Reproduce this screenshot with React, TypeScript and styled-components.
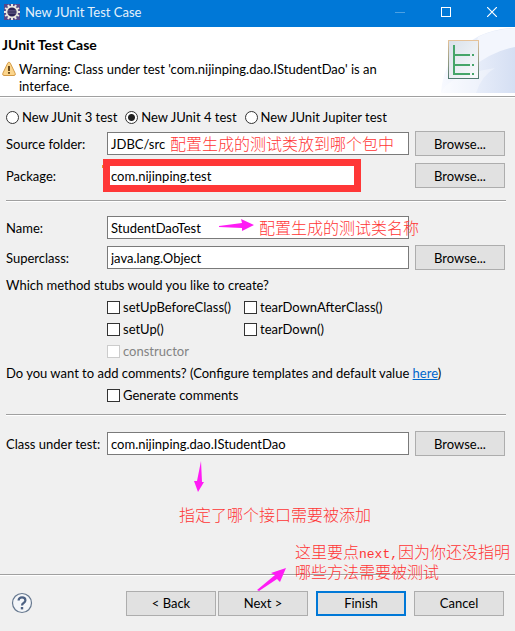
import React from "react";
import styled, { createGlobalStyle, css } from "styled-components";

const GlobalStyle = createGlobalStyle`
  *, *::before, *::after { box-sizing: border-box; }
  body { margin: 0; }
  body, input, button {
    font-family: Lato, "Noto Sans CJK SC", sans-serif;
    font-size: 13px;
    line-height: 18px;
    color: #000;
  }
`;

const Dialog = styled.main`
  display: flex;
  flex-direction: column;
  min-height: 100vh;
  overflow: hidden;
  background: #f0f0f0;
`;

const TitleBar = styled.header`
  display: flex;
  align-items: center;
  gap: 5px;
  height: 27px;
  padding: 0 0 4px 4px;
  background: #0078d7;
  color: #e4f1fb;
`;

const TitleText = styled.span`
  flex: 1;
`;

const WindowButton = styled.button<{ $dim?: boolean }>`
  display: flex;
  align-items: center;
  justify-content: center;
  width: 46px;
  height: 22px;
  padding: 0;
  border: 0;
  background: none;
  opacity: ${(p) => (p.$dim ? 0.3 : 1)};
`;

const WindowButtons = styled.div`
  display: flex;
`;

const Banner = styled.section`
  display: flex;
  justify-content: space-between;
  min-height: 70px;
  border-bottom: 1px solid #a0a0a0;
  background: #fff;
`;

const BannerText = styled.div`
  padding: 9px 0 0 2px;
`;

const BannerTitle = styled.h1`
  margin: 0 0 7px;
  font-size: 14px;
  line-height: 18px;
  font-weight: 700;
`;

const Warning = styled.p`
  display: flex;
  align-items: flex-start;
  gap: 3px;
  margin: 0;
  line-height: 17px;
`;

const Body = styled.form`
  display: flex;
  flex: 1;
  flex-direction: column;
  border-top: 1px solid #fff;
`;

const Content = styled.div`
  flex: 1;
  padding: 10px 10px 0 6px;
`;

const Choices = styled.div`
  display: flex;
  gap: 8px;
  height: 18px;
  margin-bottom: 5px;
`;

const ChoiceLabel = styled.label<{ $off?: boolean }>`
  display: flex;
  align-items: center;
  gap: 3px;
  white-space: nowrap;
  color: ${(p) => (p.$off ? "#838383" : "#000")};
`;

const Radio = styled.input.attrs({ type: "radio" })`
  appearance: none;
  flex: none;
  width: 13px;
  height: 13px;
  margin: 0;
  border: 1px solid #333;
  border-radius: 50%;
  background: #fff;
  &:checked {
    background: radial-gradient(circle, #222 0 3px, #fff 4px);
  }
`;

const Check = styled.input.attrs({ type: "checkbox" })`
  appearance: none;
  flex: none;
  width: 13px;
  height: 13px;
  margin: 0;
  border: 1px solid #333;
  background: #fff;
  &:checked {
    background: #333;
  }
  &:disabled {
    border-color: #ccc;
  }
`;

const Row = styled.div<{ $before?: number; $after?: number }>`
  display: grid;
  grid-template-columns: 101px 1fr 90px;
  align-items: center;
  height: 25px;
  margin-top: ${(p) => p.$before ?? 0}px;
  margin-bottom: ${(p) => p.$after ?? 0}px;
`;

const FieldLabel = styled.label`
  white-space: nowrap;
`;

const Field = styled.div<{ $short?: boolean }>`
  position: relative;
  margin-right: ${(p) => (p.$short ? 57 : 6)}px;
`;

const TextInput = styled.input.attrs({ type: "text" })`
  display: block;
  width: 100%;
  height: 23px;
  padding: 0 3px;
  border: 1px solid #7a7a7a;
  border-radius: 0;
  background: #fff;
  outline: none;
`;

const Button = styled.button<{ $primary?: boolean }>`
  width: 90px;
  height: 25px;
  padding: 0;
  border: ${(p) => (p.$primary ? "2px solid #0078d7" : "1px solid #adadad")};
  background: #e1e1e1;
`;

const Divider = styled.hr<{ $before?: number }>`
  height: 2px;
  margin: ${(p) => p.$before ?? 0}px -1px 0 0;
  border: 0;
  border-top: 1px solid #a0a0a0;
  border-bottom: 1px solid #fff;
`;

const Text = styled.p`
  margin: 0;
  height: 21px;
  line-height: 20px;
  white-space: nowrap;
`;

const Link = styled.a`
  color: #0066cc;
`;

const Stubs = styled.div`
  display: grid;
  grid-template-columns: 137px 1fr;
  grid-auto-rows: 22px;
  margin-bottom: 1px;
  padding-left: 101px;
`;

const Footer = styled.footer`
  position: relative;
  display: flex;
  align-items: center;
  justify-content: space-between;
  height: 57px;
  padding: 0 11px;
  border-top: 1px solid #a0a0a0;
  box-shadow: inset 0 1px #fff;
`;

const HelpButton = styled.button`
  display: flex;
  padding: 0;
  border: 0;
  background: none;
`;

const Actions = styled.div`
  display: flex;
  gap: 8px;
`;

const Pager = styled.div`
  display: flex;
  gap: 2px;
`;

const over = css<{ $x: number; $y: number }>`
  position: absolute;
  z-index: 1;
  left: ${(p) => p.$x}px;
  top: ${(p) => p.$y}px;
  pointer-events: none;
`;

const Note = styled.span<{ $x: number; $y: number }>`
  ${over}
  font: 300 16px/20px "Noto Sans CJK SC", sans-serif;
  color: #ff3535;
  white-space: nowrap;
`;

const NoteLatin = styled.span`
  font: 400 13px/1px "Liberation Mono", monospace;
`;

const Arrow = styled.svg<{ $x: number; $y: number }>`
  ${over}
  fill: #ff1cf5;
`;

const Highlight = styled.span`
  position: absolute;
  inset: -5px -3px -5px -4px;
  border: 7px solid #ff3737;
  pointer-events: none;
`;

const AssistMark = styled.span`
  position: absolute;
  left: -5px;
  top: 1px;
  width: 2px;
  height: 3px;
  background: #e8922e;
`;

const BannerArt = styled.svg`
  flex: none;
  display: block;
`;

const teeth = Array.from({ length: 12 }, (_, i) => i * 30);

function EclipseIcon() {
  return (
    <svg width="16" height="16" viewBox="0 0 16 16" aria-hidden="true">
      <rect width="16" height="16" fill="#54488a" />
      {teeth.map((a) => (
        <rect key={a} x="7" y="0" width="2" height="3" fill="#e9e6df" transform={`rotate(${a} 8 8)`} />
      ))}
      <circle cx="8" cy="8" r="5.4" fill="#2c2255" stroke="#e9e6df" strokeWidth="1.6" />
      <path d="M4 6.6h8M3.6 8h8.8M4 9.4h8" stroke="#777098" strokeWidth=".6" />
    </svg>
  );
}

function WarningIcon() {
  return (
    <svg width="14" height="16" viewBox="0 0 14 16" aria-hidden="true">
      <path d="M7 1.2 Q7.8 1.2 8.3 2.2L13.2 12.4Q13.8 14.4 12 14.5H2Q.2 14.4.8 12.4L5.7 2.2Q6.2 1.2 7 1.2Z" fill="#fbd58c" stroke="#d49a45" />
      <path d="M7 5v5" stroke="#5b3c10" strokeWidth="1.8" />
      <rect x="6.1" y="11" width="1.8" height="1.8" fill="#5b3c10" />
    </svg>
  );
}

function Art() {
  return (
    <BannerArt width="75" height="66" viewBox="0 0 75 66" aria-hidden="true">
      <defs>
        <linearGradient id="sky" x1="0" x2="1">
          <stop offset="0" stopColor="#f8faff" />
          <stop offset="1" stopColor="#d5dff3" />
        </linearGradient>
        <linearGradient id="sheet" x1="0" y1="0" x2="1" y2="1">
          <stop offset="0" stopColor="#d9e1ea" />
          <stop offset="1" stopColor="#fafbfc" />
        </linearGradient>
        <linearGradient id="frame" x1="0" y1="0" x2="0" y2="1">
          <stop offset="0" stopColor="#e6c39a" />
          <stop offset="1" stopColor="#527a70" />
        </linearGradient>
      </defs>
      <path d="M1 66Q3 28 39 9Q56 1 75 1V66Z" fill="url(#sky)" />
      <path d="M30 42Q52 24 75 20V1Q54 2 38 10Z" fill="#f3f6fd" />
      <path d="M1 66Q8 48 55 41Q42 48 36 66Z" fill="#fff" opacity=".35" />
      <rect x="8.5" y="13.5" width="30" height="38" fill="url(#sheet)" stroke="url(#frame)" />
      <path d="M14 18V48M13 28H30M13 38H30M13 47H30M32 28h2M32 38h2M32 47h2" stroke="#45a569" strokeWidth="2" fill="none" />
    </BannerArt>
  );
}

export default function App() {
  return (
    <Dialog>
      <GlobalStyle />
      <TitleBar>
        <EclipseIcon />
        <TitleText>New JUnit Test Case</TitleText>
        <WindowButtons>
          <WindowButton type="button" aria-label="Minimize" $dim>
            <svg width="10" height="10"><path d="M0 5.5h10" stroke="#fff" /></svg>
          </WindowButton>
          <WindowButton type="button" aria-label="Maximize">
            <svg width="10" height="10"><rect x=".5" y=".5" width="9" height="9" fill="none" stroke="#fff" /></svg>
          </WindowButton>
          <WindowButton type="button" aria-label="Close">
            <svg width="10" height="10"><path d="M0 0l10 10M10 0L0 10" stroke="#fff" strokeWidth="1.2" /></svg>
          </WindowButton>
        </WindowButtons>
      </TitleBar>

      <Banner>
        <BannerText>
          <BannerTitle>JUnit Test Case</BannerTitle>
          <Warning>
            <WarningIcon />
            <span>
              Warning: Class under test 'com.nijinping.dao.IStudentDao' is an
              <br />
              interface.
            </span>
          </Warning>
        </BannerText>
        <Art />
      </Banner>

      <Body onSubmit={(e) => e.preventDefault()}>
        <Content>
          <Choices>
            <ChoiceLabel><Radio name="version" />New JUnit 3 test</ChoiceLabel>
            <ChoiceLabel><Radio name="version" defaultChecked />New JUnit 4 test</ChoiceLabel>
            <ChoiceLabel><Radio name="version" />New JUnit Jupiter test</ChoiceLabel>
          </Choices>

          <Row $after={7}>
            <FieldLabel htmlFor="source">Source folder:</FieldLabel>
            <Field>
              <TextInput id="source" defaultValue="JDBC/src" />
              <Note $x={63} $y={1}>配置生成的测试类放到哪个包中</Note>
            </Field>
            <Button type="button">Browse...</Button>
          </Row>
          <Row $after={12}>
            <FieldLabel htmlFor="package">Package:</FieldLabel>
            <Field $short>
              <TextInput id="package" defaultValue="com.nijinping.test" />
              <AssistMark />
              <Highlight />
            </Field>
            <Button type="button">Browse...</Button>
          </Row>
          <Divider />
          <Row $before={13} $after={5}>
            <FieldLabel htmlFor="name">Name:</FieldLabel>
            <Field>
              <TextInput id="name" defaultValue="StudentDaoTest" />
              <Arrow $x={112} $y={3} width="36" height="13" viewBox="0 0 36 13">
                <path d="M0 7L23 4L22 0L35 6L23 12V9L0 8Z" />
              </Arrow>
              <Note $x={152} $y={1}>配置生成的测试类名称</Note>
            </Field>
          </Row>
          <Row $after={5}>
            <FieldLabel htmlFor="super">Superclass:</FieldLabel>
            <Field>
              <TextInput id="super" defaultValue="java.lang.Object" />
            </Field>
            <Button type="button">Browse...</Button>
          </Row>

          <Text>Which method stubs would you like to create?</Text>
          <Stubs>
            <ChoiceLabel><Check />setUpBeforeClass()</ChoiceLabel>
            <ChoiceLabel><Check />tearDownAfterClass()</ChoiceLabel>
            <ChoiceLabel><Check />setUp()</ChoiceLabel>
            <ChoiceLabel><Check />tearDown()</ChoiceLabel>
            <ChoiceLabel $off><Check disabled />constructor</ChoiceLabel>
          </Stubs>
          <Text>
            Do you want to add comments? (Configure templates and default value <Link href="#templates">here</Link>)
          </Text>
          <Stubs>
            <ChoiceLabel><Check />Generate comments</ChoiceLabel>
          </Stubs>
          <Divider $before={8} />
          <Row $before={15}>
            <FieldLabel htmlFor="cut">Class under test:</FieldLabel>
            <Field>
              <TextInput id="cut" defaultValue="com.nijinping.dao.IStudentDao" />
              <Arrow $x={86} $y={29} width="12" height="32" viewBox="0 0 12 32">
                <path d="M8 0L9 21H11L5 31L1 20H4Z" />
              </Arrow>
              <Note $x={72} $y={72}>指定了哪个接口需要被添加</Note>
            </Field>
            <Button type="button">Browse...</Button>
          </Row>
        </Content>

        <Footer>
          <HelpButton type="button" aria-label="Help">
            <svg width="22" height="22" viewBox="0 0 22 22">
              <circle cx="11" cy="11" r="9.5" fill="#f4f6f9" stroke="#66788f" strokeWidth="1.2" />
              <path d="M7.6 8.6Q7.6 5.4 11 5.4T14.4 8.4Q14.4 9.8 12.6 11Q11 12 11 13.6" fill="none" stroke="#4c6183" strokeWidth="2.2" />
              <rect x="9.8" y="15" width="2.4" height="2.4" fill="#4c6183" />
            </svg>
          </HelpButton>
          <Actions>
            <Pager>
              <Button type="button">&lt; Back</Button>
              <Button type="button">Next &gt;</Button>
            </Pager>
            <Button type="submit" $primary>Finish</Button>
            <Button type="button">Cancel</Button>
          </Actions>
          <Arrow $x={257} $y={-7} width="30" height="24" viewBox="0 0 30 24">
            <path d="M0 22L18 7L14 5L29 0L23 14L20 11L2 23Z" />
          </Arrow>
          <Note $x={295} $y={-34}>
            这里要点<NoteLatin>next,</NoteLatin>因为你还没指明
            <br />
            哪些方法需要被测试
          </Note>
        </Footer>
      </Body>
    </Dialog>
  );
}
